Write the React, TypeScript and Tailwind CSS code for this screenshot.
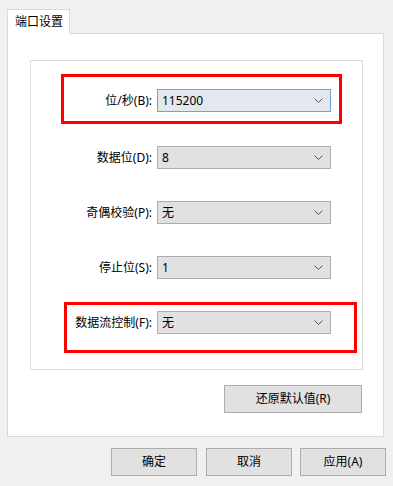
import React from "react";

const font = { fontFamily: '"Noto Sans", "Noto Sans CJK SC", sans-serif' };

function Chevron() {
  return (
    <svg width="9" height="5" viewBox="0 0 9 5" className="shrink-0">
      <path d="M0.5 0.5 L4.5 4.5 L8.5 0.5" fill="none" stroke="#555" strokeWidth="1" />
    </svg>
  );
}

function Row({ label, value, focused, mt }: { label: string; value: string; focused?: boolean; mt: string }) {
  return (
    <div className={`flex items-center ${mt}`}>
      <div className="w-[121px] text-right text-[12px] text-[#000] leading-none whitespace-nowrap">{label}</div>
      <div
        className={`ml-[5px] w-[174px] h-[23px] border flex items-center justify-between pl-[4px] pr-[7px] text-[12px] text-black ${
          focused ? "bg-[#e3e8ee] border-[#6fa2d8]" : "bg-[#e1e1e1] border-[#adadad]"
        }`}
      >
        <span>{value}</span>
        <Chevron />
      </div>
    </div>
  );
}

function Btn({ children, w = "w-[86px]" }: { children: React.ReactNode; w?: string }) {
  return (
    <div className={`${w} h-[28px] bg-[#e1e1e1] border border-[#adadad] flex items-center justify-center text-[12px] text-black`}>
      {children}
    </div>
  );
}

export default function App() {
  return (
    <div className="relative w-[393px] h-[486px] bg-[#f0f0f0] overflow-hidden" style={font}>
      <div className="pt-[9px] pl-[7px]">
        <div className="relative z-10 w-[63px] h-[25px] bg-white border border-b-0 border-[#d9d9d9] pl-[7px] pt-[3px] text-[12px] text-black -mb-px">
          端口设置
        </div>
        <div className="w-[377px] h-[404px] bg-white border border-[#d9d9d9] flex flex-col pl-[22px] pt-[26px]">
          <div className="w-[333px] h-[310px] border border-[#dcdcdc] flex flex-col">
            <Row label="位/秒(B):" value="115200" focused mt="mt-[28px]" />
            <Row label="数据位(D):" value="8" mt="mt-[34px]" />
            <Row label="奇偶校验(P):" value="无" mt="mt-[32px]" />
            <Row label="停止位(S):" value="1" mt="mt-[32px]" />
            <Row label="数据流控制(F):" value="无" mt="mt-[32px]" />
          </div>
          <div className="mt-[15px] ml-[194px]">
            <Btn w="w-[138px]">还原默认值(R)</Btn>
          </div>
        </div>
      </div>
      <div className="flex justify-end pr-[7px] mt-[11px] gap-[9px]">
        <Btn>确定</Btn>
        <div className="flex gap-[8px]">
          <Btn>取消</Btn>
          <Btn>应用(A)</Btn>
        </div>
      </div>

      <div className="absolute left-[61px] top-[74px] w-[281px] h-[50px] border-[3px] border-[#ff0000] pointer-events-none" />
      <div className="absolute left-[64px] top-[302px] w-[293px] h-[51px] border-[3px] border-[#ff0000] pointer-events-none" />
    </div>
  );
}
